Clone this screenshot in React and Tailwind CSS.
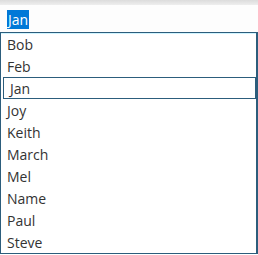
import React from 'react'

const names = ['Bob', 'Feb', 'Jan', 'Joy', 'Keith', 'March', 'Mel', 'Name', 'Paul', 'Steve']

export default function App() {
  return (
    <div className="w-[258px] h-[255px] bg-white overflow-hidden text-[14px] text-[#333]" style={{ fontFamily: '"Open Sans", "Noto Sans", sans-serif' }}>
      <div className="h-[5px] bg-gradient-to-b from-[#dcdcdc] to-[#eeeeee]" />
      <div className="h-[27px] flex items-start pl-[7px] pt-[5px] bg-[#fdfdfd]">
        <span className="bg-[#0078d7] text-white leading-[19px] px-[1px]">Jan</span>
      </div>
      <div className="border border-[#2c5d7c] border-r-[2px] h-[222px] w-[258px] shadow-[inset_0_1px_0_#cff4ff]">
        {names.map((n) => (
          <div
            key={n}
            className={
              'h-[22px] flex items-center pl-[6px] ' +
              (n === 'Jan' ? 'ml-[2px] border border-[#2c5d7c] pl-[4px]' : '')
            }
          >
            {n}
          </div>
        ))}
      </div>
    </div>
  )
}
